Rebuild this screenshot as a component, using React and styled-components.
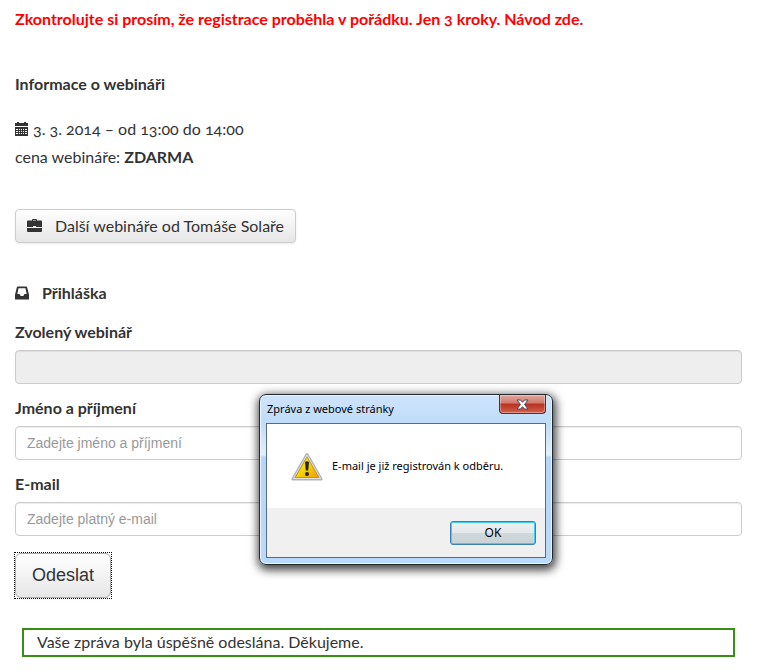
import React from 'react';
import styled, { createGlobalStyle, css } from 'styled-components';

const GlobalStyle = createGlobalStyle`
  * {
    box-sizing: border-box;
  }
  body {
    margin: 0;
    background-color: #fff;
    color: #333;
    font-family: Lato, 'Open Sans', sans-serif;
    font-size: 16px;
    font-variant-numeric: oldstyle-nums;
    line-height: 28px;
  }
  p,
  h2 {
    margin: 0;
  }
`;

const Page = styled.main`
  padding: 5px 42px 15px 15px;
`;
const Notice = styled.p`
  font-weight: 700;
  a {
    color: #f00;
    text-decoration: none;
  }
`;
const Heading = styled.h2`
  display: flex;
  align-items: center;
  gap: 13px;
  font-size: 16px;
  font-weight: 700;
`;
const Info = styled.section`
  margin-top: 37px;
  ${Heading} {
    margin-bottom: 17px;
  }
`;
const InfoLine = styled.p`
  svg {
    margin-right: 5px;
    vertical-align: -1px;
  }
`;
const Glyph = styled.svg`
  flex: none;
  width: ${(props) => props.$width}px;
  height: 14px;
  fill: #333;
`;
const buttonFace = css`
  border: 1px solid #ccc;
  border-radius: 4px;
  background: linear-gradient(#fff, #e6e6e6);
  box-shadow: 0 1px 2px rgba(0, 0, 0, 0.08);
  color: #333;
  cursor: pointer;
`;
const ButtonLink = styled.a`
  ${buttonFace}
  display: inline-flex;
  align-items: center;
  gap: 13px;
  height: 34px;
  margin-top: 38px;
  padding: 0 11px 1px;
  text-decoration: none;
`;
const Form = styled.form`
  margin-top: 36px;
`;
const Field = styled.div`
  display: flex;
  flex-direction: column;
  gap: 4px;
  margin-bottom: 10px;
  ${Heading} + & {
    margin-top: 11px;
  }
  label {
    font-weight: 700;
  }
  input {
    width: 100%;
    height: 34px;
    padding: 0 11px;
    border: 1px solid #ccc;
    border-radius: 4px;
    background-color: #fff;
    box-shadow: inset 0 1px 1px rgba(0, 0, 0, 0.075);
    font-family: 'Liberation Sans', Arial, sans-serif;
    font-size: 14px;
  }
  input:disabled {
    background-color: #eee;
  }
  input::placeholder {
    color: #999;
  }
`;
const SubmitButton = styled.button`
  ${buttonFace}
  position: relative;
  display: block;
  height: 45px;
  margin-top: 17px;
  padding: 0 16px;
  border-color: #adadad;
  border-radius: 6px;
  font-family: 'Liberation Sans', Arial, sans-serif;
  font-size: 18px;
  /* square focus ring around the rounded button */
  &::after {
    content: '';
    position: absolute;
    inset: -2px;
    border: 1px dotted #000;
  }
`;
const SuccessMessage = styled.p`
  margin: 30px 7px 0;
  padding: 0 13px 1px;
  border: 2px solid #398f14;
  line-height: 24px;
`;

const Dialog = styled.div`
  position: absolute;
  top: 394px;
  left: 259px;
  width: 294px;
  padding: 0 6px 6px;
  border: 1px solid #23272e;
  border-radius: 7px;
  background: linear-gradient(
    #cfe4fb 0,
    #bfdcfa 28px,
    #e3f0fd 60px,
    #b4d6f8 62px,
    #b9dafb 100%
  );
  box-shadow:
    inset 0 0 0 1px #eaf5ff,
    1px 3px 10px 2px rgba(0, 0, 0, 0.75);
  color: #000;
  font-family: 'Noto Sans', 'Open Sans', sans-serif;
  font-size: 11px;
`;
const TitleBar = styled.div`
  display: flex;
  align-items: flex-start;
  justify-content: space-between;
  height: 28px;
  padding-left: 1px;
`;
const CloseButton = styled.button`
  display: flex;
  align-items: center;
  justify-content: center;
  width: 47px;
  height: 19px;
  padding: 0;
  border: 1px solid #5b2a2c;
  border-top: 0;
  border-radius: 0 0 4px 4px;
  background: linear-gradient(#e0a69d, #d1796c 45%, #b8301f 50%, #d2604c);
  box-shadow: inset 0 0 0 1px rgba(255, 255, 255, 0.35);
`;
const DialogBody = styled.div`
  border: 1px solid #5a6b80;
  background-color: #fff;
`;
const DialogMessage = styled.div`
  display: flex;
  align-items: center;
  gap: 9px;
  height: 84px;
  padding-left: 24px;
`;
const DialogFooter = styled.div`
  display: flex;
  justify-content: flex-end;
  padding: 13px 9px 12px;
  background-color: #f0f0f0;
`;
const OkButton = styled.button`
  width: 86px;
  height: 24px;
  padding: 0;
  border: 1px solid #3c7fb1;
  border-radius: 3px;
  background: linear-gradient(#f0f2f3, #e3e8ea 48%, #d0d8db 50%, #c9d2d6);
  box-shadow: inset 0 0 0 1px #3fcdf4;
  color: #000;
  font-family: inherit;
  font-size: 12px;
  line-height: 20px;
`;

function CalendarIcon() {
  return (
    <Glyph $width={13} viewBox="0 0 13 14" aria-hidden="true">
      <path d="M0 1h2V0h2v1h5V0h2v1h2v3H0z" />
      <path
        fillRule="evenodd"
        d="M0 5h13v9H0zM1 7v1h2V7zM4 7v1h1V7zM6 7v1h1V7zM8 7v1h1V7zM10 7v1h2V7zM1 9v1h2V9zM4 9v1h1V9zM6 9v1h1V9zM8 9v1h1V9zM10 9v1h2V9zM1 11v1h2v-1zM4 11v1h1v-1zM6 11v1h1v-1zM8 11v1h1v-1zM10 11v1h2v-1z"
      />
    </Glyph>
  );
}

function BriefcaseIcon() {
  return (
    <Glyph $width={15} viewBox="0 0 15 14" aria-hidden="true">
      <path
        fillRule="evenodd"
        d="M5 1.500V1q0-1 1-1h3q1 0 1 1v.5h4q1 0 1 1V8H9V7H6v1H0V2.500q0-1 1-1zM6 1.500h3V1H6z"
      />
      <path d="M0 9h15v3q0 1-1 1H1q-1 0-1-1z" />
    </Glyph>
  );
}

function InboxIcon() {
  return (
    <Glyph $width={14} viewBox="0 0 15 14" aria-hidden="true">
      <path
        fillRule="evenodd"
        d="M3 0h9q.8 0 1 .8L15 9v5H0V9L2 .8Q2.200 0 3 0zM3.800 2L2.500 8h2q.8 0 1 .8l.5 1.400h3l.5-1.400q.2-.8 1-.8h2L11.200 2z"
      />
    </Glyph>
  );
}

function WarningIcon() {
  return (
    <svg width="32" height="30" viewBox="0 0 32 30" aria-hidden="true">
      <defs>
        <linearGradient id="warning" x1="0" y1="0" x2="1" y2="1">
          <stop offset="0" stopColor="#fff04a" />
          <stop offset=".5" stopColor="#f8d500" />
          <stop offset="1" stopColor="#ee9a08" />
        </linearGradient>
      </defs>
      <path
        d="M16 3.500L30 28H2z"
        fill="#c3c6ca"
        stroke="#b0b4b9"
        strokeWidth="3"
        strokeLinejoin="round"
      />
      <path
        d="M16 4L29.500 27.500h-27z"
        fill="none"
        stroke="#dfe1e4"
        strokeLinejoin="round"
      />
      <path d="M16 6L27.800 26.500H4.200z" fill="url(#warning)" stroke="#c99b08" />
      <path d="M14 11q2-1.500 4 0l-.8 8.500h-2.400z" fill="#222" />
      <circle cx="16" cy="23" r="2" fill="#222" />
    </svg>
  );
}

function CloseIcon() {
  return (
    <svg width="13" height="11" viewBox="0 0 13 11" aria-hidden="true">
      <path
        d="M1 1h3.500l2 2.300L8.500 1H12L8.500 5.500 12 10H8.500l-2-2.300L4.500 10H1l3.500-4.500z"
        fill="#fff"
        stroke="#4d4a5c"
        strokeLinejoin="round"
      />
    </svg>
  );
}

function AlertDialog() {
  return (
    <Dialog
      role="alertdialog"
      aria-labelledby="dialog-title"
      aria-describedby="dialog-message"
    >
      <TitleBar>
        <span id="dialog-title">Zpráva z webové stránky</span>
        <CloseButton type="button" aria-label="Zavřít">
          <CloseIcon />
        </CloseButton>
      </TitleBar>
      <DialogBody>
        <DialogMessage>
          <WarningIcon />
          <span id="dialog-message">E-mail je již registrován k odběru.</span>
        </DialogMessage>
        <DialogFooter>
          <OkButton type="button">OK</OkButton>
        </DialogFooter>
      </DialogBody>
    </Dialog>
  );
}

export default function App() {
  return (
    <>
      <GlobalStyle />
      <Page>
        <Notice>
          <a href="#navod">
            Zkontrolujte si prosím, že registrace proběhla v pořádku. Jen 3
            kroky. Návod zde.
          </a>
        </Notice>
        <Info>
          <Heading>Informace o webináři</Heading>
          <InfoLine>
            <CalendarIcon />
            3. 3. 2014 – od 13:00 do 14:00
          </InfoLine>
          <InfoLine>
            cena webináře: <strong>ZDARMA</strong>
          </InfoLine>
        </Info>
        <ButtonLink href="#webinare">
          <BriefcaseIcon />
          Další webináře od Tomáše Solaře
        </ButtonLink>
        <Form onSubmit={(e) => e.preventDefault()}>
          <Heading>
            <InboxIcon />
            Přihláška
          </Heading>
          <Field>
            <label htmlFor="webinar">Zvolený webinář</label>
            <input id="webinar" type="text" disabled />
          </Field>
          <Field>
            <label htmlFor="name">Jméno a příjmení</label>
            <input
              id="name"
              type="text"
              placeholder="Zadejte jméno a příjmení"
            />
          </Field>
          <Field>
            <label htmlFor="email">E-mail</label>
            <input id="email" type="email" placeholder="Zadejte platný e-mail" />
          </Field>
          <SubmitButton type="submit">Odeslat</SubmitButton>
        </Form>
        <SuccessMessage role="status">
          Vaše zpráva byla úspěšně odeslána. Děkujeme.
        </SuccessMessage>
      </Page>
      <AlertDialog />
    </>
  );
}
